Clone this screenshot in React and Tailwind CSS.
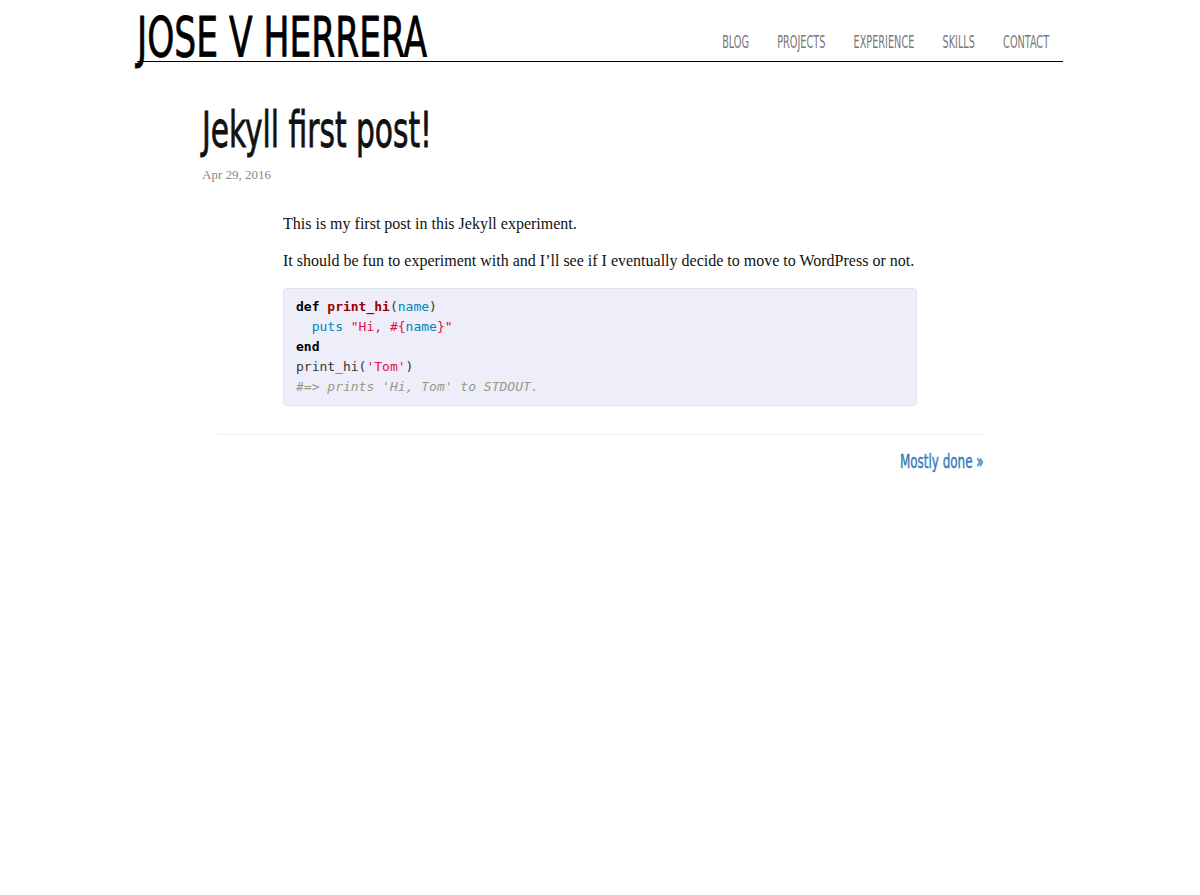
import React from "react";

const heading = { fontFamily: '"DejaVu Sans Condensed", "Liberation Sans Narrow", "Liberation Sans", sans-serif' };

function Header() {
  return (
    <header className="mx-auto flex h-[62px] w-[926px] items-end justify-between border-b border-black">
      <div
        className="w-[300px] shrink-0 whitespace-nowrap text-[56px] leading-[48px] text-black [-webkit-text-stroke:0.8px_black]"
        style={heading}
      >
        <span className="inline-block origin-left scale-x-[0.685]">JOSE V HERRERA</span>
      </div>
      <div className="flex w-[360px] justify-end">
        <nav
          className="flex shrink-0 origin-right scale-x-[0.6] gap-[47px] whitespace-nowrap pb-[6px] pr-[23px] text-[18px] text-[#777]"
          style={heading}
        >
          <a href="#">BLOG</a>
          <a href="#">PROJECTS</a>
          <a href="#">EXPERIENCE</a>
          <a href="#">SKILLS</a>
          <a href="#">CONTACT</a>
        </nav>
      </div>
    </header>
  );
}

function CodeBlock() {
  return (
    <pre className="mt-4 rounded border border-[#e1e1f0] bg-[#eeeefb] px-3 py-[8px] font-['DejaVu_Sans_Mono',monospace] text-[13px] leading-[20px] text-[#333]">
      <div>
        <b className="text-black">def</b> <b className="text-[#990000]">print_hi</b>(<span className="text-[#0086b3]">name</span>)
      </div>
      <div>
        {"  "}<span className="text-[#0086b3]">puts</span> <span className="text-[#d14]">"Hi, </span><span className="text-[#d14]">#{"{"}</span><span className="text-[#0086b3]">name</span><span className="text-[#d14]">{"}"}"</span>
      </div>
      <div>
        <b className="text-black">end</b>
      </div>
      <div>
        print_hi(<span className="text-[#d14]">'Tom'</span>)
      </div>
      <div className="italic text-[#999988]">#=&gt; prints 'Hi, Tom' to STDOUT.</div>
    </pre>
  );
}

export default function App() {
  return (
    <div className="min-h-[895px] bg-white font-['Liberation_Serif',serif]">
      <Header />
      <main className="mx-auto w-[796px] pt-[38px]">
        <h1
          className="whitespace-nowrap text-[50px] leading-[60px] text-[#111] [-webkit-text-stroke:0.8px_#111]"
          style={heading}
        >
          <span className="inline-block origin-left scale-x-[0.66]">Jekyll first post!</span>
        </h1>
        <div className="mt-[5px] text-[13px] text-[#888]">Apr 29, 2016</div>
        <article className="mx-auto mt-[28px] w-[634px] text-[16px] leading-[22px] text-[#111]">
          <p>This is my first post in this Jekyll experiment.</p>
          <p className="mt-[15px]">
            It should be fun to experiment with and I’ll see if I eventually decide to move to WordPress or not.
          </p>
          <CodeBlock />
        </article>
        <hr className="mx-auto mt-[28px] w-[767px] border-[#eee]" />
        <div className="mx-auto flex w-[767px] justify-end pt-[12px]">
          <a
            href="#"
            className="inline-block origin-right scale-x-[0.7] whitespace-nowrap text-[19px] text-[#337ab7] [-webkit-text-stroke:0.4px_#337ab7]"
            style={heading}
          >
            Mostly done »
          </a>
        </div>
      </main>
    </div>
  );
}
